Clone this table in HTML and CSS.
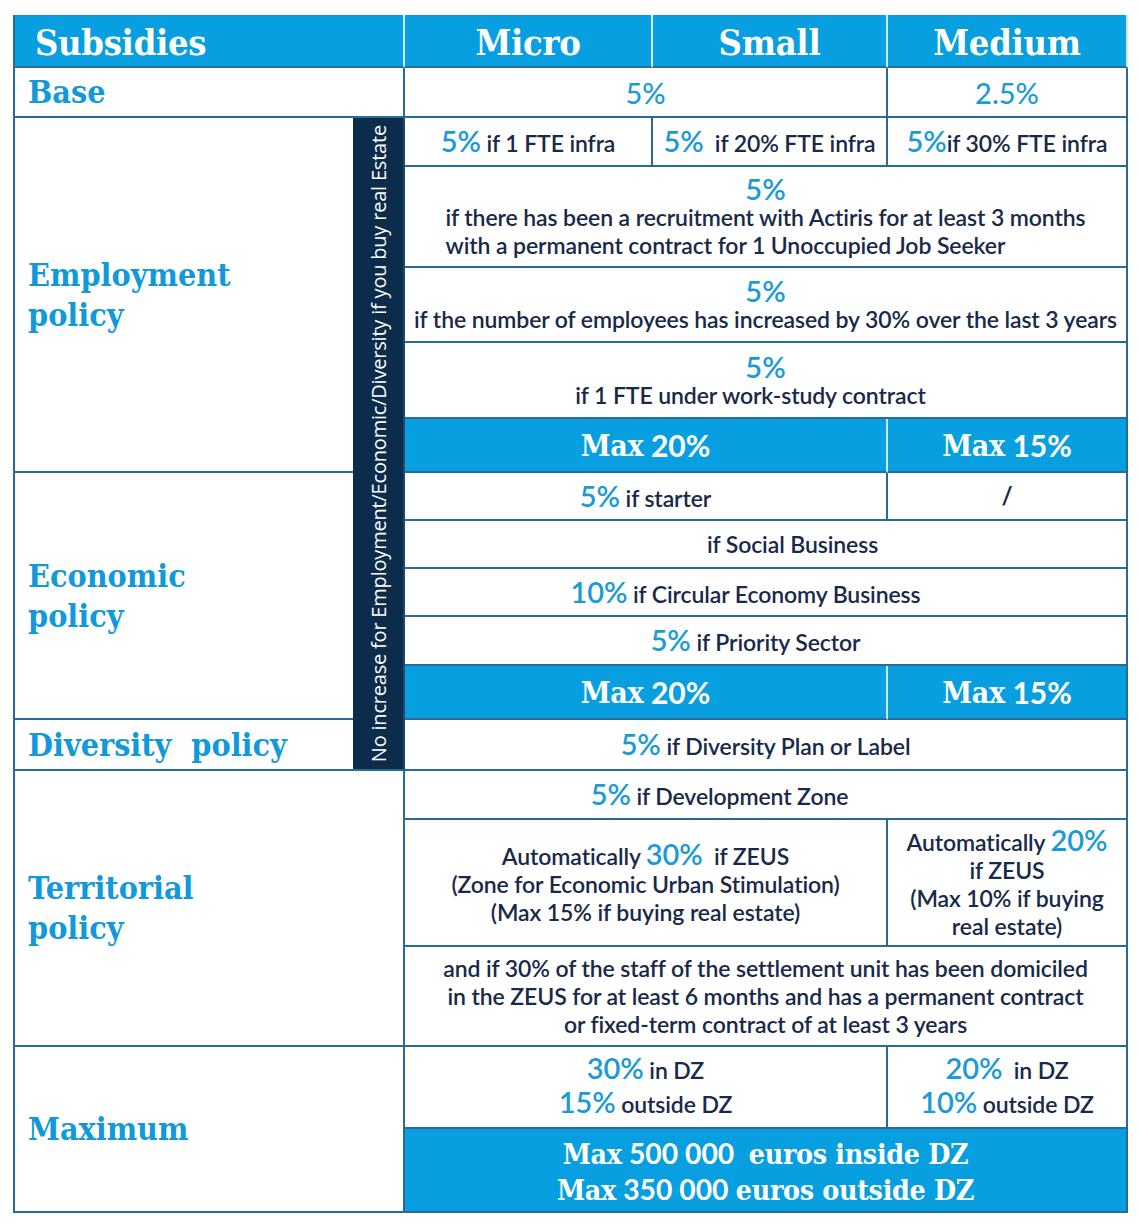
FILE: index.html
```html
<!DOCTYPE html>
<html lang="en">
<head>
<meta charset="utf-8">
<title>Subsidies</title>
<link rel="stylesheet" href="styles.css">
</head>
<body>
<div class="table">
  <div class="cell head head-title c-ab">Subsidies</div>
  <div class="cell head c-mic">Micro</div>
  <div class="cell head c-sm">Small</div>
  <div class="cell head c-med">Medium</div>

  <div class="cell label c-ab">Base</div>
  <div class="cell c-ms"><span class="pct big">5%</span></div>
  <div class="cell c-med"><span class="pct big">2.5%</span></div>

  <div class="cell label c-a span5 no-r">Employment<br>policy</div>
  <div class="cell band c-b span11"><span class="vtext">No increase for Employment/Economic/Diversity if you buy real Estate</span></div>
  <div class="cell c-mic"><p class="line"><span class="pct">5%</span> if 1 FTE infra</p></div>
  <div class="cell c-sm"><p class="line"><span class="pct">5%</span>&nbsp; if 20% FTE infra</p></div>
  <div class="cell c-med"><p class="line"><span class="pct">5%</span>if 30% FTE infra</p></div>
  <div class="cell c-all"><span class="pct">5%</span><p class="txt left">if there has been a recruitment with Actiris for at least 3 months<br>with a permanent contract for 1 Unoccupied Job Seeker</p></div>
  <div class="cell c-all"><span class="pct">5%</span><p class="txt">if the number of employees has increased by 30% over the last 3 years</p></div>
  <div class="cell c-all"><span class="pct">5%</span><p class="txt shift-l">if 1 FTE under work-study contract</p></div>
  <div class="cell bar c-ms light-r"><span class="slab">Max</span>&nbsp;<span class="num">20%</span></div>
  <div class="cell bar c-med"><span class="slab">Max</span>&nbsp;<span class="num">15%</span></div>

  <div class="cell label c-a span5 no-r">Economic<br>policy</div>
  <div class="cell c-ms"><p class="line"><span class="pct">5%</span> if starter</p></div>
  <div class="cell c-med"><p class="line slash">/</p></div>
  <div class="cell c-all"><p class="line pad-social">if Social Business</p></div>
  <div class="cell c-all"><p class="line pad-circ"><span class="pct">10%</span> if Circular Economy Business</p></div>
  <div class="cell c-all"><p class="line pad-prio"><span class="pct">5%</span> if Priority Sector</p></div>
  <div class="cell bar c-ms light-r"><span class="slab">Max</span>&nbsp;<span class="num">20%</span></div>
  <div class="cell bar c-med"><span class="slab">Max</span>&nbsp;<span class="num">15%</span></div>

  <div class="cell label c-a no-r">Diversity&nbsp; policy</div>
  <div class="cell c-all"><p class="line"><span class="pct">5%</span> if Diversity Plan or Label</p></div>

  <div class="cell label c-ab span3">Territorial<br>policy</div>
  <div class="cell c-all"><p class="line pad-dev"><span class="pct">5%</span> if Development Zone</p></div>
  <div class="cell c-ms"><p class="txt">Automatically <span class="pct">30%</span>&nbsp; if ZEUS<br>(Zone for Economic Urban Stimulation)<br>(Max 15% if buying real estate)</p></div>
  <div class="cell c-med"><p class="txt">Automatically <span class="pct">20%</span><br>if ZEUS<br>(Max 10% if buying<br>real estate)</p></div>
  <div class="cell c-all"><p class="txt">and if 30% of the staff of the settlement unit has been domiciled<br>in the ZEUS for at least 6 months and has a permanent contract<br>or fixed-term contract of at least 3 years</p></div>

  <div class="cell label c-ab span2">Maximum</div>
  <div class="cell c-ms"><p class="txt dz"><span class="pct">30%</span> in DZ<br><span class="pct">15%</span> outside DZ</p></div>
  <div class="cell c-med"><p class="txt dz"><span class="pct">20%</span>&nbsp; in DZ<br><span class="pct">10%</span> outside DZ</p></div>
  <div class="cell bar euros c-all"><span class="slab">Max</span> <span class="num">500 000</span>&nbsp; <span class="slab">euros inside DZ</span><br><span class="slab">Max</span> <span class="num">350 000</span> <span class="slab">euros outside DZ</span></div>
</div>
</body>
</html>
```

FILE: styles.css
```css
* { box-sizing: border-box; }

html, body {
  margin: 0;
  padding: 0;
  background: #ffffff;
}

body {
  padding: 15px 0 0 13px;
  font-family: "Lato", "Open Sans", sans-serif;
  color: #19294a;
}

.table {
  display: grid;
  width: 1115px;
  grid-template-columns: 338px 52px 248px 235px 240px;
  grid-template-rows: 53px 50px 49px 101px 75px 76px 54px 48px 48px 48px 49px 54px 51px 49px 127px 100px 82px 84px;
  border-left: 2px solid #2a6a98;
}

.cell {
  display: flex;
  flex-direction: column;
  align-items: center;
  justify-content: center;
  text-align: center;
  border-right: 2px solid #2a6a98;
  border-bottom: 2px solid #2a6a98;
  background: #ffffff;
  min-width: 0;
}

/* column placement */
.c-ab { grid-column: 1 / 3; }
.c-a { grid-column: 1; }
.c-b { grid-column: 2; }
.c-mic { grid-column: 3; }
.c-sm { grid-column: 4; }
.c-med { grid-column: 5; }
.c-ms { grid-column: 3 / 5; }
.c-all { grid-column: 3 / 6; }

.span2 { grid-row: span 2; }
.span3 { grid-row: span 3; }
.span5 { grid-row: span 5; }
.span11 { grid-row: span 11; }

.no-r { border-right: 0; }

/* header */
.head {
  background: #079fe0;
  color: #ffffff;
  font-family: "DejaVu Serif Condensed", "DejaVu Serif", serif;
  font-weight: bold;
  font-size: 36px;
  letter-spacing: -0.3px;
  border-right-color: #cdeaf8;
  padding-top: 2px;
}

.head-title {
  align-items: flex-start;
  padding-left: 20px;
}

/* left labels */
.label {
  align-items: flex-start;
  text-align: left;
  padding-left: 13px;
  color: #1199d9;
  font-family: "DejaVu Serif Condensed", "DejaVu Serif", serif;
  font-weight: bold;
  font-size: 32px;
  line-height: 40px;
  letter-spacing: 0;
}

/* vertical band */
.band {
  background: #0c2c4b;
  border-right-color: #1d4a72;
  justify-content: flex-end;
  padding-bottom: 7px;
}

.vtext {
  writing-mode: vertical-rl;
  transform: rotate(180deg);
  color: #ffffff;
  font-family: "Open Sans", "Lato", sans-serif;
  font-size: 20px;
  letter-spacing: -0.2px;
  white-space: nowrap;
}

/* text bits */
.pct {
  color: #1b9ad8;
  font-weight: 600;
  font-size: 29px;
  line-height: 1;
}

.pct.big {
  font-size: 29px;
  font-weight: 500;
}

.line,
.txt {
  margin: 0;
  font-size: 23px;
  font-weight: 600;
  line-height: 28px;
  white-space: nowrap;
  letter-spacing: -0.1px;
}

.txt.left { text-align: left; }

.shift-l { padding-right: 30px; }
.pad-social { padding-left: 54px; }
.pad-circ { padding-right: 40px; }
.pad-prio { padding-right: 20px; }
.pad-dev { padding-right: 92px; }

.dz { line-height: 34px; }

.slash {
  font-size: 24px;
  font-weight: 700;
}

/* blue bars */
.bar {
  background: #079fe0;
  color: #ffffff;
  flex-direction: row;
  font-size: 30px;
}

.bar.light-r { border-right-color: #cdeaf8; }

.slab {
  font-family: "DejaVu Serif Condensed", "DejaVu Serif", serif;
  font-weight: bold;
  letter-spacing: -0.3px;
}

.num {
  font-family: "Lato", sans-serif;
  font-weight: 700;
}

.euros {
  display: block;
  font-size: 28.3px;
  line-height: 35px;
  padding-top: 7px;
}
```
